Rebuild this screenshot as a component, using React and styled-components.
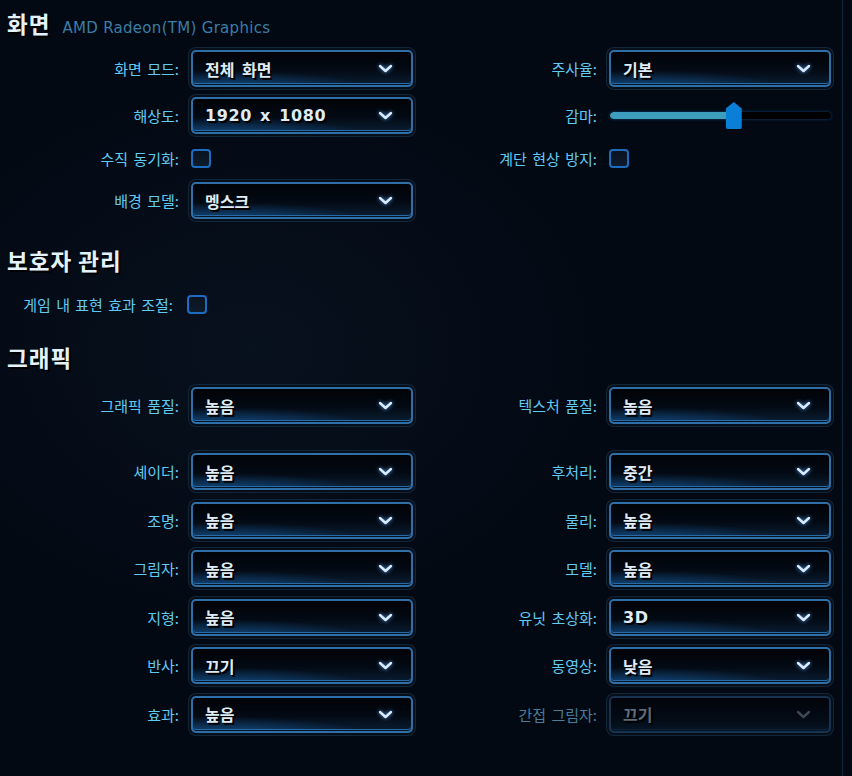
import styled, { createGlobalStyle } from "styled-components";

const GlobalStyle = createGlobalStyle`
  html, body {
    margin: 0;
    padding: 0;
    background: #030913;
  }
  body {
    font-family: "Noto Sans CJK KR", "Noto Sans", sans-serif;
  }
`;

const Page = styled.div`
  width: 843px;
  min-height: 776px;
  box-sizing: border-box;
  padding-top: 9px;
  border-right: 1px solid #0f2638;
  background:
    radial-gradient(60% 50% at 30% 45%, rgba(20, 40, 60, 0.25), transparent 70%),
    #030913;
  display: flex;
  flex-direction: column;
  overflow: hidden;
`;

const HeadingRow = styled.div`
  display: flex;
  align-items: baseline;
  gap: 12px;
  padding-left: 7px;
  height: 28px;
  line-height: 28px;
  margin-top: ${(p) => p.$top || 0}px;
`;

const Heading = styled.h2`
  margin: 0;
  font-size: 22.5px;
  font-weight: 700;
  letter-spacing: 1px;
  color: #e4f3fb;
  text-shadow: 2px 2px 0 #000;
  font-family: "Noto Sans CJK KR", sans-serif;
`;

const SubTitle = styled.span`
  font-family: "DejaVu Sans", sans-serif;
  font-size: 15px;
  color: #3b7da5;
  letter-spacing: 0.3px;
`;

const Rows = styled.div`
  display: flex;
  flex-direction: column;
  gap: ${(p) => p.$gap}px;
  margin-top: ${(p) => p.$top || 0}px;
`;

const Row = styled.div`
  display: grid;
  grid-template-columns: 426px 1fr;
  height: ${(p) => p.$h || 37}px;
`;

const Field = styled.div`
  display: flex;
  align-items: center;
  gap: ${(p) => p.$gap || 12}px;
`;

const Label = styled.label`
  width: ${(p) => p.$w}px;
  flex-shrink: 0;
  text-align: right;
  font-size: 15px;
  word-spacing: 2px;
  color: ${(p) => (p.$disabled ? "#4b7c98" : "#62c9f2")};
  white-space: nowrap;
`;

const Select = styled.div`
  width: 222px;
  height: 37px;
  box-sizing: border-box;
  display: flex;
  align-items: center;
  justify-content: space-between;
  padding: 0 18px 0 12px;
  border: 2px solid ${(p) => (p.$disabled ? "#173350" : "#2e6fa8")};
  border-radius: 5px;
  background: ${(p) =>
    p.$disabled
      ? "linear-gradient(180deg, #01040a 0%, #040c17 70%, #071626 100%)"
      : `radial-gradient(110% 95% at 14% 115%, rgba(24, 112, 196, 0.6), transparent 62%),
         linear-gradient(180deg, #010307 0%, #030a14 55%, #0a1e33 100%)`};
  box-shadow:
    inset 0 -1px 0 #051424,
    inset 0 -2px 0 ${(p) => (p.$disabled ? "#0d2236" : "#286aa6")},
    0 0 0 2px #060f19,
    0 0 0 3px #12263a;
  font-family: "DejaVu Sans", "Noto Sans CJK KR", sans-serif;
  font-weight: 700;
  font-size: 16px;
  word-spacing: 2px;
  letter-spacing: ${(p) => (p.$wide ? "0.6px" : "0")};
  color: ${(p) => (p.$disabled ? "#5f6c78" : "#dfebf5")};
  text-shadow: 1px 1px 0 #000, 2px 2px 0 #000;
  cursor: pointer;
`;

const Chevron = styled.svg`
  flex-shrink: 0;
  filter: ${(p) =>
    p.$disabled ? "none" : "drop-shadow(0 0 2px rgba(90, 170, 255, 0.9))"};
`;

const Check = styled.span`
  display: block;
  width: 20px;
  height: 19px;
  box-sizing: border-box;
  border: 2px solid #1d6cc0;
  border-radius: 4px;
  background: linear-gradient(180deg, #0a1420, #0d1b2b);
`;

const SliderBox = styled.div`
  position: relative;
  width: 221px;
  height: 27px;
  display: flex;
  align-items: center;
`;

const Track = styled.div`
  width: 100%;
  height: 7px;
  border-radius: 4px;
  background: #000;
  box-shadow: 0 0 3px rgba(30, 110, 190, 0.6);
  overflow: hidden;
`;

const Fill = styled.div`
  height: 100%;
  background: #3c9dbd;
  border-radius: 4px 0 0 4px;
`;

const Thumb = styled.div`
  position: absolute;
  top: 0;
  width: 16px;
  height: 27px;
  margin-left: -8px;
  background: #0a7fd8;
  border-radius: 0 0 2px 2px;
  clip-path: polygon(50% 0, 100% 24%, 100% 100%, 0 100%, 0 24%);
  filter: drop-shadow(0 0 3px rgba(20, 130, 230, 0.8));
`;

const ChevronIcon = ({ disabled }) => (
  <Chevron $disabled={disabled} width="15" height="9" viewBox="0 0 15 9">
    <path
      d="M2 2 L7.5 7 L13 2"
      fill="none"
      stroke={disabled ? "#3c4955" : "#d9ecff"}
      strokeWidth="2.4"
      strokeLinecap="round"
      strokeLinejoin="round"
    />
  </Chevron>
);

const Dropdown = ({ label, value, w, disabled, wide }) => (
  <Field>
    <Label $w={w} $disabled={disabled}>
      {label}
    </Label>
    <Select $disabled={disabled} $wide={wide}>
      <span>{value}</span>
      <ChevronIcon disabled={disabled} />
    </Select>
  </Field>
);

const Checkbox = ({ label, w, gap }) => (
  <Field $gap={gap}>
    <Label $w={w}>{label}</Label>
    <Check />
  </Field>
);

const Slider = ({ label, w, value }) => (
  <Field $gap={13}>
    <Label $w={w}>{label}</Label>
    <SliderBox>
      <Track>
        <Fill style={{ width: `${value * 100}%` }} />
      </Track>
      <Thumb style={{ left: `${value * 100}%` }} />
    </SliderBox>
  </Field>
);

const L = 179;
const R = 171;

const graphics = [
  ["셰이더:", "높음", "후처리:", "중간"],
  ["조명:", "높음", "물리:", "높음"],
  ["그림자:", "높음", "모델:", "높음"],
  ["지형:", "높음", "유닛 초상화:", "3D"],
  ["반사:", "끄기", "동영상:", "낮음"],
];

const App = () => {
  return (
    <Page>
      <GlobalStyle />
      <HeadingRow>
        <Heading>화면</Heading>
        <SubTitle>AMD Radeon(TM) Graphics</SubTitle>
      </HeadingRow>
      <Rows $gap={10} $top={13}>
        <Row>
          <Dropdown label="화면 모드:" value="전체 화면" w={L} />
          <Dropdown label="주사율:" value="기본" w={R} />
        </Row>
        <Row>
          <Dropdown label="해상도:" value="1920 x 1080" w={L} wide />
          <Slider label="감마:" value={0.56} w={R} />
        </Row>
        <Row $h={28}>
          <Checkbox label="수직 동기화:" w={L} />
          <Checkbox label="계단 현상 방지:" w={R} />
        </Row>
        <Row>
          <Dropdown label="배경 모델:" value="멩스크" w={L} />
        </Row>
      </Rows>

      <HeadingRow $top={27}>
        <Heading>보호자 관리</Heading>
      </HeadingRow>
      <Rows $gap={0} $top={16}>
        <Row $h={28}>
          <Checkbox label="게임 내 표현 효과 조절:" w={173} gap={14} />
        </Row>
      </Rows>

      <HeadingRow $top={25}>
        <Heading>그래픽</Heading>
      </HeadingRow>
      <Rows $gap={0} $top={16}>
        <Row>
          <Dropdown label="그래픽 품질:" value="높음" w={L} />
          <Dropdown label="텍스처 품질:" value="높음" w={R} />
        </Row>
      </Rows>
      <Rows $gap={11.5} $top={29}>
        {graphics.map(([l1, v1, l2, v2]) => (
          <Row key={l1}>
            <Dropdown label={l1} value={v1} w={L} />
            <Dropdown label={l2} value={v2} w={R} wide={v2 === "3D"} />
          </Row>
        ))}
        <Row>
          <Dropdown label="효과:" value="높음" w={L} />
          <Dropdown label="간접 그림자:" value="끄기" w={R} disabled />
        </Row>
      </Rows>
    </Page>
  );
};

export default App;
